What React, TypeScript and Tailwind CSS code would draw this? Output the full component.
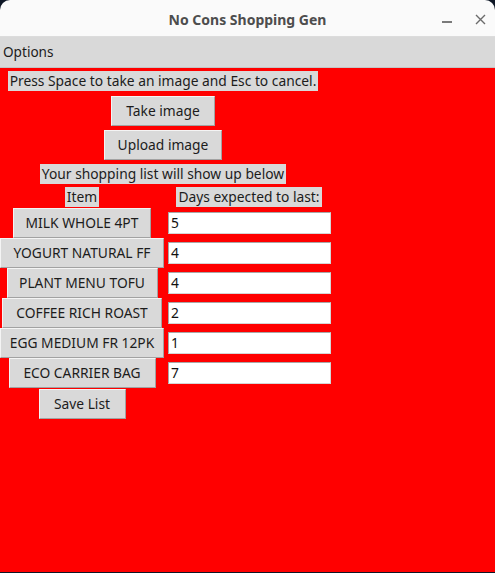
const items = [
  { name: 'MILK WHOLE 4PT', days: '5', w: 'w-[138px]' },
  { name: 'YOGURT NATURAL FF', days: '4', w: 'w-[164px]' },
  { name: 'PLANT MENU TOFU', days: '4', w: 'w-[151px]' },
  { name: 'COFFEE RICH ROAST', days: '2', w: 'w-[160px]' },
  { name: 'EGG MEDIUM FR 12PK', days: '1', w: 'w-[167px]' },
  { name: 'ECO CARRIER BAG', days: '7', w: 'w-[147px]' },
];

const font = { fontFamily: '"Noto Sans", sans-serif' };

const btn =
  'h-[30px] bg-[#d9d9d9] text-[13.8px] text-[#1c1c1c] border border-t-[#f4f4f4] border-l-[#f4f4f4] border-b-[#a2a2a2] border-r-[#a2a2a2] flex items-center justify-center whitespace-nowrap';

const label =
  'h-[20px] px-[2px] bg-[#d9d9d9] text-[13.8px] text-[#1c1c1c] flex items-center whitespace-nowrap';

const App = () => {
  return (
    <div className="w-[495px] h-[573px] bg-[#0e1726] overflow-hidden">
      <div className="h-[572px] flex flex-col rounded-t-[10px] overflow-hidden">
        {/* title bar */}
        <div className="h-[37px] bg-[#fafafa] border-b border-[#dcdcdc] flex items-center relative shrink-0">
          <span
            className="w-full text-center text-[14px] font-bold text-[#4d4d4d] pt-[2px]"
            style={{ fontFamily: '"Noto Sans", sans-serif' }}
          >
            No Cons Shopping Gen
          </span>
          <span className="absolute left-[442px] top-[21px] w-[10px] h-[1.5px] bg-[#7a7a7a]" />
          <svg className="absolute left-[475px] top-[14px]" width="11" height="11" viewBox="0 0 11 11">
            <path d="M1 1L10 10M10 1L1 10" stroke="#6b6b6b" strokeWidth="1.4" />
          </svg>
        </div>

        {/* menu bar */}
        <div className="h-[31px] bg-[#d9d9d9] flex items-center px-[3px] shrink-0 border-b border-[#c4c4c4]" style={font}>
          <span className="text-[13.6px] text-[#1c1c1c]">Options</span>
        </div>

        {/* body */}
        <div className="flex-1 bg-[#ff0000]" style={font}>
          <div className="w-[334px] pt-[3px]">
            <div className="w-[326px] flex justify-center">
              <span className={label}>Press Space to take an image and Esc to cancel.</span>
            </div>
            <div className="w-[326px] flex justify-center mt-[5px]">
              <div className={`${btn} w-[104px]`}>Take image</div>
            </div>
            <div className="w-[326px] flex justify-center mt-[4px]">
              <div className={`${btn} w-[118px]`}>Upload image</div>
            </div>
            <div className="w-[326px] flex justify-center mt-[4px]">
              <span className={label}>Your shopping list will show up below</span>
            </div>

            <div className="grid grid-cols-[164px_170px] mt-[3px]">
              <div className="flex justify-center">
                <span className={label}>Item</span>
              </div>
              <div className="flex justify-center">
                <span className={label}>Days expected to last:</span>
              </div>

              {items.map((it, i) => (
                <div key={i} className="contents">
                  <div className={`flex justify-center ${i === 0 ? 'mt-[1px]' : ''}`}>
                    <div className={`${btn} ${it.w}`}>{it.name}</div>
                  </div>
                  <div className={`flex items-center pl-[4px] ${i === 0 ? 'mt-[1px]' : ''}`}>
                    <div className="w-[163px] h-[22px] bg-white border border-t-[#a8a8a8] border-l-[#a8a8a8] border-b-[#d6d6d6] border-r-[#d6d6d6] text-[13.8px] text-[#111] flex items-center px-[2px]">
                      {it.days}
                    </div>
                  </div>
                </div>
              ))}

              <div className="flex justify-center mt-[1px]">
                <div className={`${btn} w-[87px]`}>Save List</div>
              </div>
            </div>
          </div>
        </div>
      </div>
    </div>
  );
};

export default App;
